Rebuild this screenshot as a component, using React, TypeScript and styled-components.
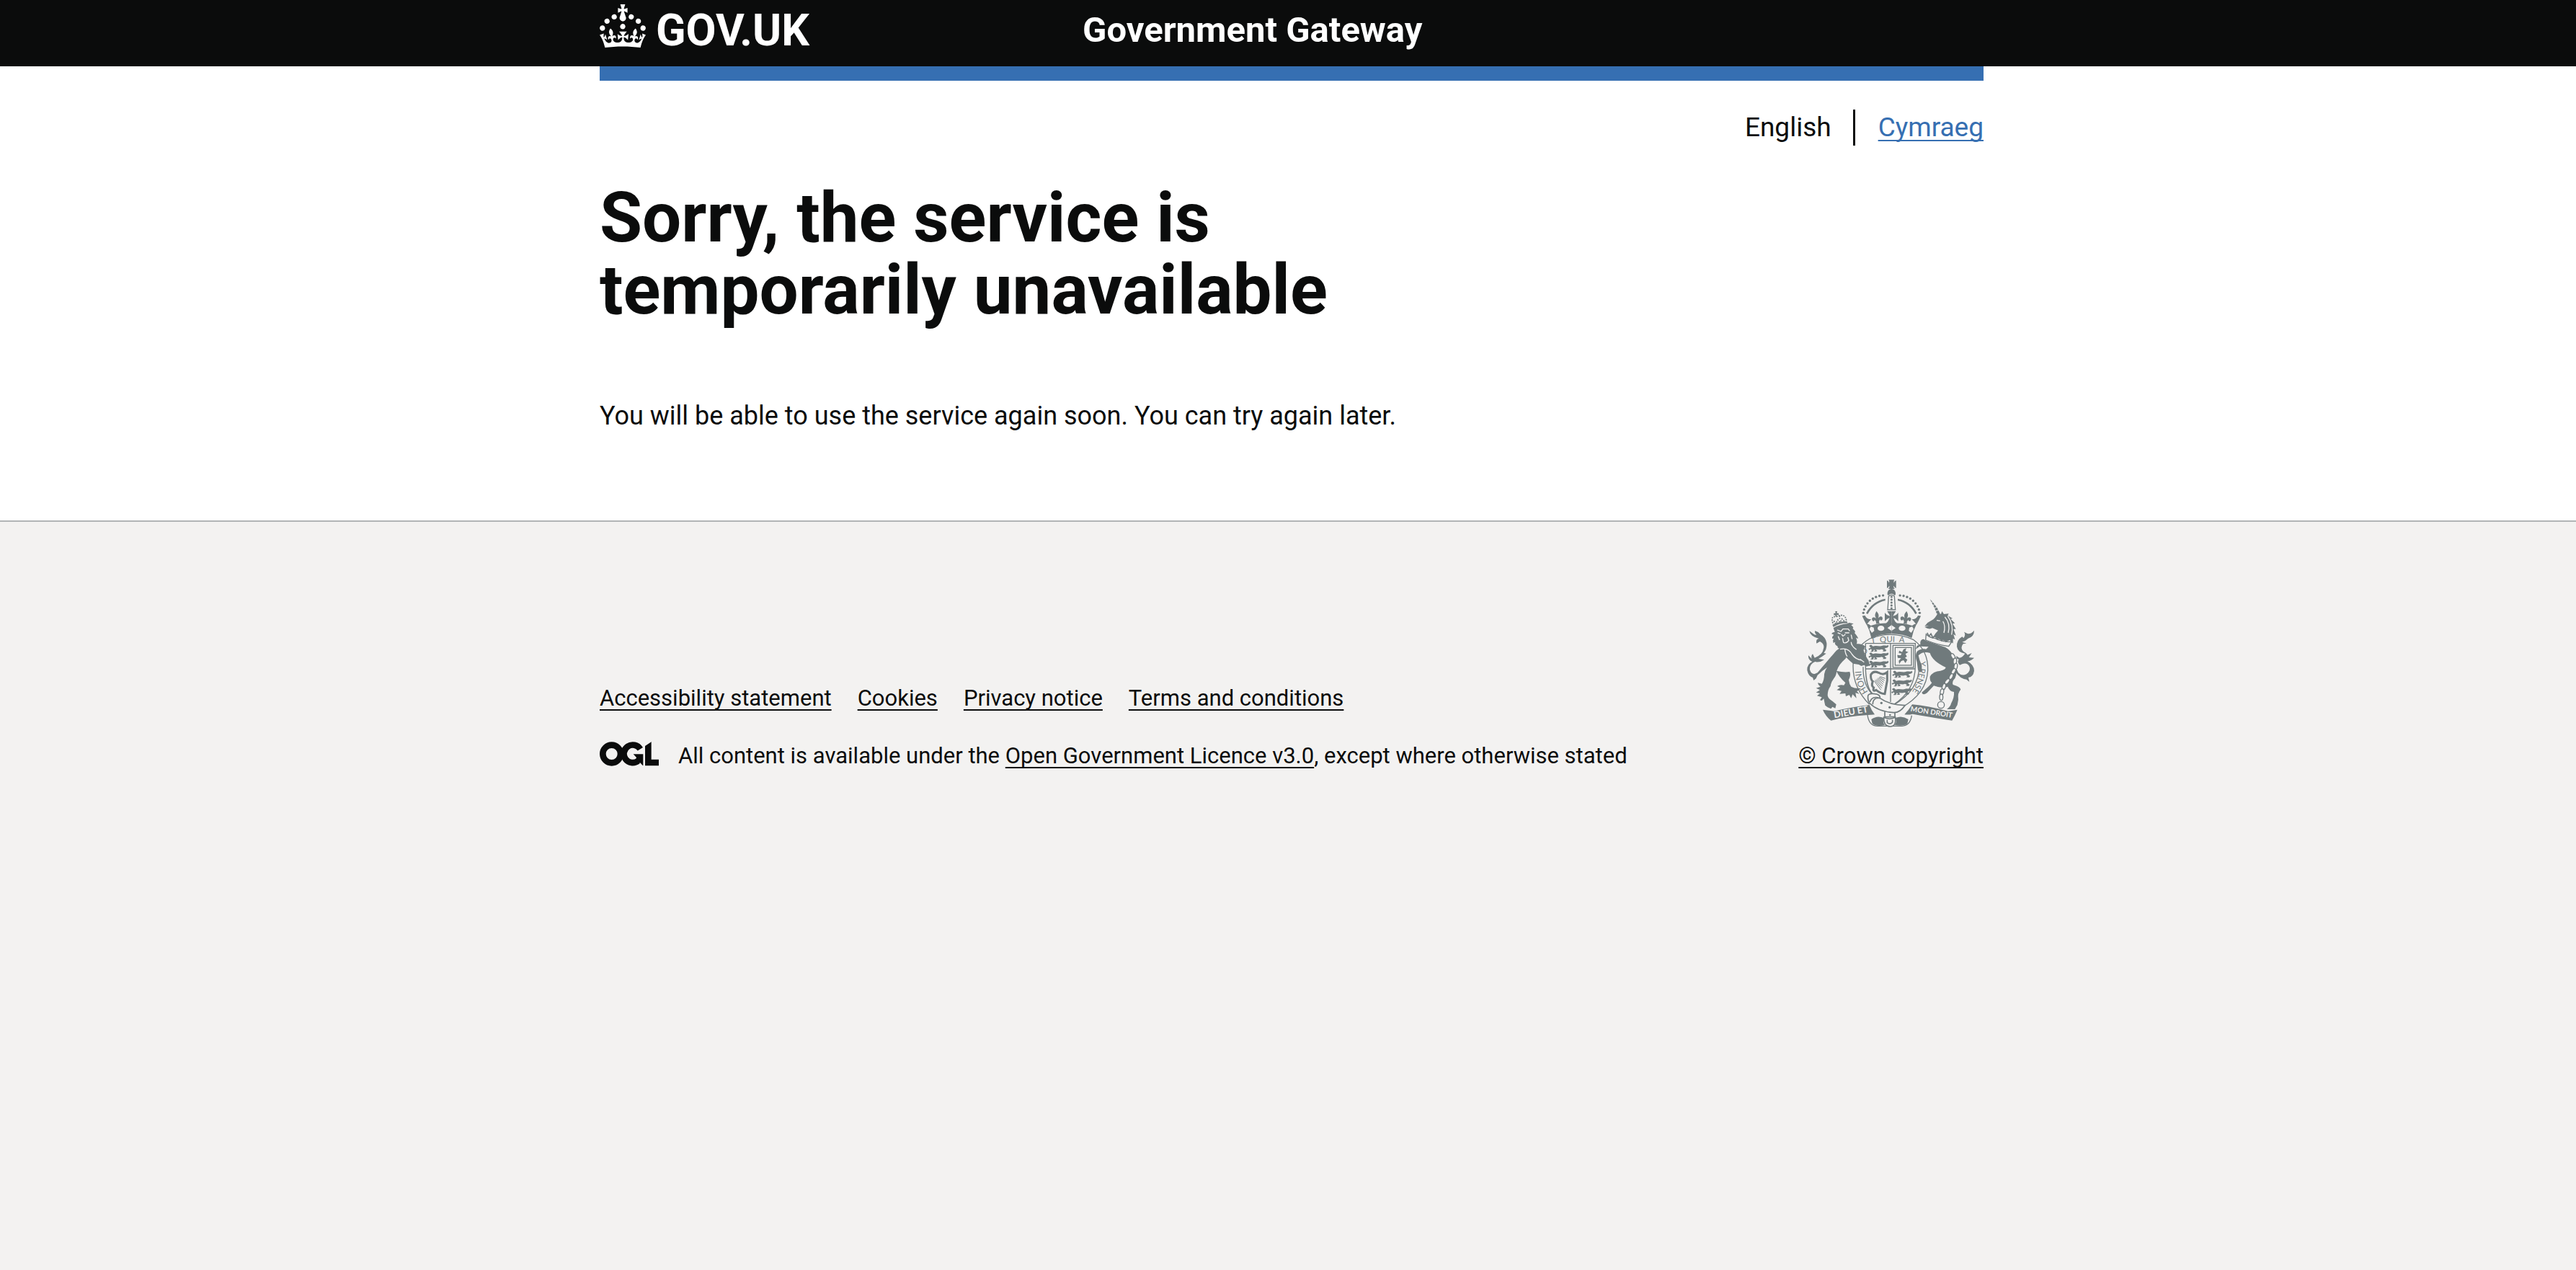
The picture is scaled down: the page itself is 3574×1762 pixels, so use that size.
import React from "react";
import styled, { createGlobalStyle, css } from "styled-components";

const ink = "#0b0c0c";
const blue = "#366fb2";
const canvas = "#f3f2f1";
const crestGrey = "#707a7c";

const GlobalStyle = createGlobalStyle`
  *, *::before, *::after { box-sizing: border-box; }
  html, body, #root { height: 100%; }
  body {
    margin: 0;
    background: #fff;
    color: ${ink};
    font-family: Roboto, "Liberation Sans", Arial, sans-serif;
  }
`;

const Page = styled.div`
  min-height: 100%;
  display: flex;
  flex-direction: column;
`;

const Band = styled.div`
  padding: 0 0 0 10px;
`;

const Container = styled.div`
  max-width: 1920px;
  margin: 0 auto;
`;

const HeaderBand = styled(Band).attrs({ as: "header" })`
  background: ${ink};
  color: #fff;
`;

const HeaderRow = styled(Container)`
  display: grid;
  grid-template-columns: 670px 1fr;
  align-items: start;
  padding: 6px 0 14px;
`;

const HomeLink = styled.a`
  display: inline-flex;
  align-items: flex-start;
  gap: 14px;
  color: inherit;
  text-decoration: none;
  font-size: 61px;
  line-height: 72px;
  font-weight: 700;
  justify-self: start;
`;

const CrownSvg = styled.svg`
  display: block;
  width: 64px;
  height: 60px;
`;

const ServiceName = styled.a`
  justify-self: start;
  color: inherit;
  text-decoration: none;
  font-size: 49px;
  line-height: 72px;
  font-weight: 700;
`;

const BlueBar = styled.div`
  height: 20px;
  background: ${blue};
`;

const linkLine = css`
  text-decoration: underline;
  text-decoration-thickness: 2px;
  text-underline-offset: 5px;
  text-decoration-skip-ink: none;
`;

const LanguageList = styled.ul`
  display: flex;
  justify-content: flex-end;
  list-style: none;
  margin: 40px 0 0;
  padding: 0;
  font-size: 37px;
  line-height: 50px;
`;

const LanguageItem = styled.li`
  & + & {
    margin-left: 30px;
    padding-left: 32px;
    border-left: 3px solid ${ink};
  }
`;

const BlueLink = styled.a`
  color: ${blue};
  ${linkLine}
`;

const Main = styled.main`
  padding: 50px 0 120px;
`;

const Title = styled.h1`
  max-width: 1260px;
  margin: 0 0 100px;
  font-size: 96px;
  line-height: 100px;
  font-weight: 700;
`;

const Body = styled.p`
  margin: 0;
  font-size: 36px;
  line-height: 50px;
`;

const FooterBand = styled(Band).attrs({ as: "footer" })`
  flex: 1;
  border-top: 2px solid #b1b4b6;
  background: ${canvas};
`;

const FooterRow = styled(Container)`
  display: flex;
  justify-content: space-between;
  align-items: flex-end;
  padding-top: 80px;
  font-size: 31px;
  line-height: 40px;
`;

const FooterLink = styled.a`
  color: ${ink};
  ${linkLine}
`;

const FooterLinks = styled.ul`
  display: flex;
  gap: 36px;
  list-style: none;
  margin: 0 0 40px;
  padding: 0;
`;

const Licence = styled.div`
  display: flex;
  gap: 27px;
  align-items: flex-start;
`;

const LicenceMark = styled.svg`
  display: block;
  width: 82px;
  height: 34px;
`;

const Copyright = styled.a`
  display: flex;
  flex-direction: column;
  align-items: center;
  gap: 20px;
  color: ${ink};
  ${linkLine}
`;

const CrestSvg = styled.svg`
  display: block;
  width: 233px;
  height: 205px;
`;

function Crown() {
  return (
    <CrownSvg viewBox="0 0 32 30" fill="currentColor" aria-hidden="true">
      <path d="M22.6 10.4c-1 .4-2-.1-2.4-1-.4-.9.1-2 1-2.4.9-.4 2 .1 2.4 1s-.1 2-1 2.4m-5.9 6.7c-.9.4-2-.1-2.4-1-.4-.9.1-2 1-2.4.9-.4 2 .1 2.4 1s-.1 2-1 2.4m10.8-3.7c-1 .4-2-.1-2.4-1-.4-.9.1-2 1-2.4.9-.4 2 .1 2.4 1s0 2-1 2.4m3.3 4.8c-1 .4-2-.1-2.4-1-.4-.9.1-2 1-2.4.9-.4 2 .1 2.4 1s-.1 2-1 2.4M17 4.7l2.3 1.2V2.5l-2.3.7-.2-.2.9-3h-3.4l.9 3-.2.2c-.1.1-2.3-.7-2.3-.7v3.4L15 4.7c.1.1.1.2.2.2l-1.3 4c-.1.2-.1.4-.1.6 0 1.1.8 2 1.9 2.2h.7c1-.2 1.9-1.1 1.9-2.1 0-.2 0-.4-.1-.6l-1.3-4c-.1-.2 0-.2.1-.3m-7.6 5.7c.9.4 2-.1 2.4-1 .4-.9-.1-2-1-2.4-.9-.4-2 .1-2.4 1s0 2 1 2.4m-5 3c.9.4 2-.1 2.4-1 .4-.9-.1-2-1-2.4-.9-.4-2 .1-2.4 1s.1 2 1 2.4m-3.2 4.8c.9.4 2-.1 2.4-1 .4-.9-.1-2-1-2.4-.9-.4-2 .1-2.4 1s0 2 1 2.4m14.8 11c4.4 0 8.6.3 12.3.8 1.1-4.5 2.4-7 3.7-8.8l-2.5-.9c.2 1.3.3 1.9 0 2.7-.4-.4-.8-1.1-1.1-2.3l-1.2 4c.7-.5 1.3-.8 2-.9-1.1 2.5-2.6 3.1-3.5 3-1.1-.2-1.7-1.2-1.5-2.1.3-1.2 1.5-1.5 2.1-.1 1.1-2.3-.8-3-2-2.3 1.9-1.9 2.1-3.5.6-5.6-2.1 1.6-2.1 3.2-1.2 5.5-1.2-1.4-3.2-.6-2.5 1.6.9-1.4 2.1-.5 1.9.8-.2 1.1-1.7 2.1-3.5 1.9-2.7-.2-2.9-2.1-2.9-3.6.7-.1 1.9.5 2.9 1.9l.4-4.3c-1.1 1.1-2.1 1.4-3.2 1.4.4-1.2 2.1-3 2.1-3h-5.4s1.7 1.9 2.1 3c-1.1 0-2.1-.2-3.2-1.4l.4 4.3c1-1.4 2.2-2 2.9-1.9-.1 1.5-.2 3.4-2.9 3.6-1.9.2-3.4-.8-3.5-1.9-.2-1.3 1-2.2 1.9-.8.7-2.3-1.2-3-2.5-1.6.9-2.2.9-3.9-1.2-5.5-1.5 2-1.3 3.7.6 5.6-1.2-.7-3.1 0-2 2.3.6-1.4 1.8-1.1 2.1.1.2.9-.3 1.9-1.5 2.1-.9.2-2.4-.5-3.5-3 .6 0 1.2.3 2 .9l-1.2-4c-.3 1.1-.7 1.9-1.1 2.3-.3-.8-.2-1.4 0-2.7l-2.9.9C1.3 23 2.6 25.5 3.7 30c3.7-.5 7.9-.8 12.3-.8" />
    </CrownSvg>
  );
}

/* Licence symbol: two linked rings, an arrowhead and an angled bar */
function LicenceSymbol() {
  return (
    <LicenceMark viewBox="0 0 246 102" role="img" aria-label="Open Government Licence">
      <g fill="none" stroke={ink} strokeWidth="26">
        <circle cx="50" cy="51" r="37" />
        <path d="M169 31A37 37 0 1 0 160 80" />
        <path d="M202 0V87H246" />
      </g>
      <path fill={ink} d="M140 52H181V99H179L168 87L158 92L150 76L153 66Z" />
      <path fill={canvas} d="M186 0H216L189 18H186Z" />
    </LicenceMark>
  );
}

/* Fleur-de-lis on the crown's rim */
const Lily = ({ x, y, r = 0 }: { x: number; y: number; r?: number }) => (
  <path
    transform={`translate(${x} ${y}) rotate(${r})`}
    d="M0-26C8-14 10-8 4 4C12-6 24-4 22 8C20 16 12 16 12 9C6 14 4 20 8 26H-8C-4 20-6 14-12 9C-12 16-20 16-22 8C-24-4-12-6-4 4C-10-8-8-14 0-26Z"
  />
);

/* One passant lion of the English quarters */
const Passant = ({ x, y }: { x: number; y: number }) => (
  <path
    transform={`translate(${x} ${y})`}
    d="M3 6C2 0 12-2 15 4L18 6C30 0 44 8 56 4C66 0 74 7 80 0L83 5C80 14 70 13 66 16L74 22L70 27H58L62 22L54 18C46 22 38 19 30 20L36 25L32 28H20L27 24L22 20L18 29H7L13 23L10 17L2 22L-1 16L9 12Z"
  />
);

function RoyalArms() {
  const beads = [0, 1, 2, 3, 4, 5, 6, 7, 8];
  const links = [
    [686, 360, 60], [694, 380, 95], [697, 402, 100], [688, 422, 120], [678, 444, 115],
    [662, 464, 130], [648, 486, 105], [640, 508, 100], [637, 530, 90],
  ];
  return (
    <CrestSvg viewBox="78 40 699 615" fill={crestGrey} aria-hidden="true">
      <defs>
        <path id="garterTop" d="M340 308Q430 292 530 310" />
        <path id="garterLeft" d="M338 514Q300 468 304 390" />
        <path id="garterRight" d="M547 372Q556 486 470 556" />
      </defs>

      {/* Crown */}
      <path d="M411 44Q418 46 420 54Q424 48 418 41H442Q436 48 440 54Q442 46 449 44V76Q442 74 440 66Q436 72 444 79H416Q424 72 420 66Q418 74 411 76Z" />
      <path d="M430 78Q449 82 447 103L443 106Q430 92 417 106L413 103Q411 82 430 78Z" />
      <path d="M418 110Q430 98 442 110L446 166H414Z" fill="none" stroke={crestGrey} strokeWidth="4" />
      {[112, 124, 136, 148, 160].map((y) => <circle key={y} cx="430" cy={y} r="4.5" />)}
      {[1, -1].map((s) => (
        <g key={s} transform={`translate(430 0) scale(${s} 1)`}>
          {beads.map((i) => {
            const a = (i / 8) * 1.38 + 0.06;
            return <circle key={i} cx={30 + 88 * Math.sin(a)} cy={190 - 84 * Math.cos(a)} r="5" />;
          })}
          <path d="M26 120Q80 130 106 180L99 184Q74 138 26 128Z" />
          <path d="M110 190Q122 190 122 192Q112 214 104 228Q94 214 84 206Q104 206 110 190Z" />
          <path d="M0 172H18Q10 184 6 192Q20 190 28 178V214Q18 202 8 200Q12 214 24 224L0 226Z" />
          <Lily x={60} y={198} r={6} />
          <path d="M0 222Q52 220 86 232Q100 222 104 226Q90 252 84 284Q48 266 0 266Z" />
          <ellipse cx="44" cy="243" rx="14" ry="11" fill={canvas} />
          <path d="M0 230L17 242L0 254Z" fill={canvas} />
          <path d="M74 240L86 236L92 246L82 262L72 254Z" fill={canvas} />
        </g>
      ))}

      {/* Garter and shield */}
      <g fill="none" stroke={crestGrey} strokeWidth="4">
        <path d="M340 286Q430 250 520 290Q584 336 581 418Q576 516 470 574M340 286Q270 326 270 400Q270 492 338 560" />
        <path d="M312 404Q310 478 352 520M545 404Q544 500 440 562" />
        <path d="M322 306H529V400C529 470 500 520 440 560M322 306V400C322 460 334 500 350 514M426 306V550M322 412H529" />
        <rect x="436" y="314" width="86" height="92" />
        <rect x="445" y="323" width="68" height="74" />
      </g>
      <g fontFamily="Lato, sans-serif" fontSize="36">
        <text fontSize="34"><textPath href="#garterTop" startOffset="6">T{"\u00a0\u00a0"}QUI{"\u00a0\u00a0"}A</textPath></text>
        <text><textPath href="#garterLeft" startOffset="8">HONI</textPath></text>
        <text fontSize="34"><textPath href="#garterRight" startOffset="8">Y PENSE</textPath></text>
      </g>
      <text transform="translate(312 370) rotate(-62)" fontFamily="Lato, sans-serif" fontSize="32">SO</text>
      {[312, 344, 378].map((y) => <Passant key={y} x={335} y={y} />)}
      {[420, 456, 492].map((y, i) => <Passant key={y} x={434 - i * 2} y={y} />)}
      <path d="M462 336L474 342L480 330L492 326L488 338L500 342L488 350L494 360L486 366L496 374L488 388L480 376L470 380L462 392L460 378L470 368L456 366L454 354L468 356L472 348L460 346Z" />
      <path fill="none" stroke={crestGrey} strokeWidth="9" d="M344 436Q354 418 376 428Q396 440 412 426V460L402 516Q386 516 366 500Q350 508 356 490Q344 482 352 464Q342 456 344 436Z" />
      <g stroke={crestGrey} strokeWidth="3">
        {[0, 1, 2, 3, 4, 5, 6].map((i) => <path key={i} d={`M${358 + i * 4} ${462 - i * 3}L${386 + i * 3} ${500 - i * 8}`} />)}
      </g>

      {/* Buckle and strap */}
      <path fill={canvas} stroke={crestGrey} strokeWidth="5" d="M332 524Q336 512 360 516Q384 518 382 534Q420 562 486 564Q466 594 440 594Q374 590 340 556Q330 544 332 524Z" />
      <path fill="none" stroke={crestGrey} strokeWidth="5" d="M340 550Q350 522 382 534Q352 530 352 560M402 590V612H444V592" />
      <circle cx="388" cy="554" r="5" /><circle cx="422" cy="572" r="5" /><circle cx="424" cy="604" r="4" />
      <path d="M346 622Q370 604 398 616Q392 634 402 646Q366 654 350 640ZM500 622Q474 604 446 616Q454 634 442 646Q480 652 496 640Z" />
      <path fill="none" stroke={crestGrey} strokeWidth="4" d="M330 604Q336 650 372 650H474Q508 648 514 606" />
      <path fill={canvas} stroke={crestGrey} strokeWidth="5" d="M398 614Q422 626 446 614Q450 652 424 652Q396 650 398 614Z" />
      <path fill="none" stroke={crestGrey} strokeWidth="5" d="M412 624V636Q424 646 434 634V624" />

      {/* Motto scroll */}
      <path d="M144 582L190 588Q270 570 338 562Q346 584 360 602Q344 604 330 604Q240 610 178 627Q156 610 144 582Z" />
      <path d="M704 582L666 588Q580 566 516 560Q500 586 484 602Q500 604 518 600Q610 616 682 627Q694 606 704 582Z" />
      <g fill={canvas} fontFamily="Lato, sans-serif" fontWeight="700">
        <text transform="translate(192 617) rotate(-10)" fontSize="38">DIEU ET</text>
        <text transform="translate(508 588) rotate(9)" fontSize="30">MON DROIT</text>
      </g>

      {/* Lion */}
      <path d="M196 172H204L202 180L210 180V188L202 187V194H196V187L190 189V180L197 181Z" />
      <path fill="none" stroke={crestGrey} strokeWidth="5" strokeDasharray="6 4" d="M186 222Q176 190 198 196Q238 176 242 212M190 212L198 224L206 208L216 218L224 204L234 214M214 190V204" />
      <path d="M184 228Q212 214 244 214L248 222Q218 220 188 238Z" />
      <path d="M188 242Q210 228 246 224L254 220L272 224L262 230Q276 240 268 244Q284 258 276 262Q294 284 290 286L282 282Q290 300 284 308Q308 306 322 320Q310 330 316 342Q326 366 334 376L340 398L326 402L316 396L304 400L294 394L270 390Q248 372 242 364L238 370Q210 394 202 420Q200 440 190 452Q178 468 176 484Q164 500 164 522Q166 536 184 546L200 560L196 576L184 570L178 578L164 572L154 564Q150 548 148 536L140 544L132 542L140 530L120 524L132 514L116 510L132 500L116 492L134 486Q122 478 124 470L140 474Q150 460 150 434Q152 418 162 406L142 420Q134 428 122 438L116 452L106 460L102 448Q84 442 79 418Q78 392 100 382Q82 374 84 356L98 370Q94 356 102 350L110 366Q144 352 146 330Q154 310 132 298L118 306Q114 288 128 286Q92 278 88 254L104 266Q112 272 118 270Q108 262 112 254Q126 258 134 268Q156 280 160 304Q162 330 148 346L158 348Q140 362 126 370L150 374Q130 388 112 382Q88 392 90 416Q96 436 112 432L122 428L200 336L214 326Q204 328 206 318Q190 310 196 300L188 304Q184 292 190 286L184 286Q180 280 190 270L180 266Q184 258 194 258Z" />
      <path fill="none" stroke={canvas} strokeWidth="4" d="M204 250L220 256L228 246L250 246L256 254M206 262L218 266M236 262L254 262M222 268L228 276L238 268M226 284L230 302Q242 308 252 294L248 280M208 276L214 292M262 270L266 288M236 330Q238 352 246 360M216 330Q250 322 266 352Q280 372 306 376M262 300Q262 316 284 332M300 372L316 384" />
      <path d="M200 420Q232 428 256 424Q262 440 252 458Q254 476 262 486Q280 496 304 492L286 506L296 516L280 512L284 534L268 518L262 534L254 520L240 526L238 514L214 516L222 504L202 500L216 490L204 484Q214 476 232 480L238 470Q212 446 200 420Z" />

      {/* Unicorn */}
      <path d="M590 122L600 132L620 158L632 182L618 182L608 156Z" />
      <path stroke={canvas} strokeWidth="3" d="M596 136L606 132M602 148L614 142M608 160L620 154M612 172L628 166" />
      <path d="M580 220L604 206Q620 190 622 178L636 184L640 172L648 184L668 182L664 190L684 202L676 204L694 222L684 224L698 246L688 246L698 274L688 268L694 290L686 286L686 306Q676 300 672 292L666 296Q636 296 606 278Q612 262 624 252L600 242Q586 250 568 238L586 232L568 234Z" />
      <path fill="none" stroke={canvas} strokeWidth="4" d="M618 210L632 212M652 196Q676 222 666 262M664 192Q690 230 680 270M644 214Q656 234 648 262" />
      <path fill={canvas} stroke={crestGrey} strokeWidth="4" d="M574 268Q592 284 610 284Q640 300 680 300L668 318Q622 312 572 292Z" />
      <path fill="none" stroke={crestGrey} strokeWidth="5" d="M578 262L586 276L594 266L602 282L612 272L620 288L630 278L638 294L648 284L656 298L668 290" />
      <path d="M552 294Q562 282 572 294Q632 314 654 322Q694 344 696 402Q706 426 694 452Q680 464 686 478Q716 486 718 498Q704 512 708 540L704 562L694 580H660Q676 568 678 556Q692 530 690 508Q670 504 664 486Q642 496 606 482L578 512Q560 524 556 510Q590 482 598 470Q588 460 590 444Q602 422 634 420Q654 416 656 406Q600 380 590 346Q562 336 542 356Q546 378 556 398L556 424Q546 430 540 416L536 384Q526 356 536 340Q552 326 574 330L584 320Q562 318 548 318L530 330L536 316L550 310Q548 302 552 294Z" />
      <path d="M696 402L708 428Q722 444 742 434Q762 418 754 402Q744 384 724 392L714 396Q702 384 710 372Q698 372 700 358L712 366Q726 364 736 348Q706 344 702 320Q700 292 724 278L730 284Q740 270 732 258L744 264Q758 270 774 252Q774 278 748 286Q740 296 724 300L742 306L728 308Q714 326 730 340Q744 348 746 354L764 346L752 364L774 366Q762 378 746 380Q774 396 774 420Q770 446 750 448L754 466L742 456Q716 454 696 424Z" />
      <g fill={canvas} stroke={crestGrey} strokeWidth="4">
        {links.map(([x, y, r]) => <ellipse key={y} cx={x} cy={y} rx="13" ry="7" transform={`rotate(${r} ${x} ${y})`} />)}
        <circle cx="636" cy="562" r="14" />
      </g>
    </CrestSvg>
  );
}

const footerLinks = ["Accessibility statement", "Cookies", "Privacy notice", "Terms and conditions"];

export default function App() {
  return (
    <Page>
      <GlobalStyle />
      <HeaderBand>
        <HeaderRow>
          <HomeLink href="#">
            <Crown />
            GOV.UK
          </HomeLink>
          <ServiceName href="#">Government Gateway</ServiceName>
        </HeaderRow>
      </HeaderBand>
      <Band>
        <Container>
          <BlueBar />
          <nav aria-label="Language">
            <LanguageList>
              <LanguageItem>English</LanguageItem>
              <LanguageItem>
                <BlueLink href="#" lang="cy">Cymraeg</BlueLink>
              </LanguageItem>
            </LanguageList>
          </nav>
          <Main>
            <Title>Sorry, the service is temporarily unavailable</Title>
            <Body>You will be able to use the service again soon. You can try again later.</Body>
          </Main>
        </Container>
      </Band>
      <FooterBand>
        <FooterRow>
          <div>
            <FooterLinks>
              {footerLinks.map((label) => (
                <li key={label}>
                  <FooterLink href="#">{label}</FooterLink>
                </li>
              ))}
            </FooterLinks>
            <Licence>
              <LicenceSymbol />
              <span>
                All content is available under the{" "}
                <FooterLink href="#">Open Government Licence v3.0</FooterLink>, except where otherwise stated
              </span>
            </Licence>
          </div>
          <Copyright href="#">
            <RoyalArms />
            <span>© Crown copyright</span>
          </Copyright>
        </FooterRow>
      </FooterBand>
    </Page>
  );
}
